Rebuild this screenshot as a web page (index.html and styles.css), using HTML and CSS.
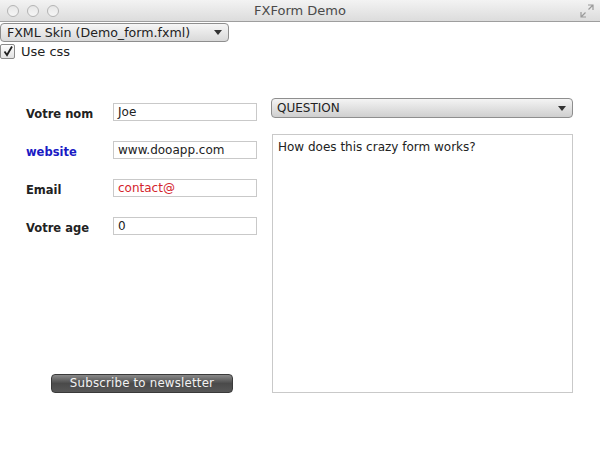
FILE: index.html
```html
<!DOCTYPE html>
<html>
<head>
<meta charset="utf-8">
<link rel="stylesheet" href="styles.css">
</head>
<body>
<div class="titlebar">
  <div class="lights">
    <span class="light"></span><span class="light"></span><span class="light"></span>
  </div>
  <div class="title">FXForm Demo</div>
  <svg class="resize" width="14" height="14" viewBox="0 0 14 14">
    <path d="M8 1h5v5M13 1L8.5 5.5M6 13H1V8M1 13l4.5-4.5" fill="none" stroke="#9a9a9a" stroke-width="1.2"/>
  </svg>
</div>
<div class="skin-combo">
  <span class="combo-text">FXML Skin (Demo_form.fxml)</span>
  <span class="arrow"></span>
</div>
<label class="check-row">
  <span class="checkbox"><svg width="12" height="12" viewBox="0 0 12 12"><path d="M2.5 6.5L5 10L10 1.5" fill="none" stroke="#222" stroke-width="1.8"/></svg></span>
  <span class="check-label">Use css</span>
</label>
<div class="main">
  <div class="left">
    <div class="form">
      <div class="label">Votre nom</div>
      <div class="field">Joe</div>
      <div class="label blue">website</div>
      <div class="field">www.dooapp.com</div>
      <div class="label">Email</div>
      <div class="field red">contact@</div>
      <div class="label">Votre age</div>
      <div class="field">0</div>
    </div>
    <div class="button">Subscribe to newsletter</div>
  </div>
  <div class="right">
    <div class="q-combo">
      <span class="combo-text">QUESTION</span>
      <span class="arrow"></span>
    </div>
    <div class="textarea">How does this crazy form works?</div>
  </div>
</div>
</body>
</html>
```

FILE: styles.css
```css
html, body {
  margin: 0;
  padding: 0;
  background: #ffffff;
  width: 600px;
  height: 459px;
  overflow: hidden;
  font-family: "DejaVu Sans", "Liberation Sans", sans-serif;
  font-size: 12px;
  color: #1a1a1a;
}
.titlebar {
  height: 21px;
  border-bottom: 1px solid #9e9e9e;
  background: linear-gradient(#f3f3f3, #dcdcdc);
  display: flex;
  align-items: center;
  position: relative;
}
.lights {
  display: flex;
  gap: 8px;
  padding-left: 7px;
}
.light {
  width: 10px;
  height: 10px;
  border-radius: 50%;
  border: 1px solid #b4b4b4;
  background: linear-gradient(#e6e6e6, #f6f6f6);
}
.title {
  position: absolute;
  left: 0;
  right: 0;
  text-align: center;
  font-size: 13px;
  color: #4a4a4a;
  top: 3px;
}
.resize {
  position: absolute;
  right: 6px;
  top: 4px;
}
.skin-combo {
  margin-top: 1px;
  height: 17px;
  border: 1px solid #8e8e8e;
  border-radius: 4px;
  background: linear-gradient(#f6f6f6, #d9d9d9);
  display: flex;
  align-items: center;
  justify-content: space-between;
  padding: 0 6px 0 6px;
  box-sizing: content-box;
  width: 215px;
  font-size: 12.6px;
  color: #222;
}
.arrow {
  width: 0;
  height: 0;
  border-left: 4px solid transparent;
  border-right: 4px solid transparent;
  border-top: 5px solid #333;
}
.check-row {
  display: flex;
  align-items: center;
  gap: 6px;
  height: 16px;
  margin-top: 1px;
}
.checkbox {
  width: 13px;
  height: 13px;
  border: 1px solid #8a8a8a;
  border-radius: 2px;
  background: linear-gradient(#fdfdfd, #e2e2e2);
  display: flex;
  align-items: center;
  justify-content: center;
}
.check-label {
  font-size: 13px;
  color: #222;
}
.main {
  display: flex;
  margin-top: 39px;
  height: 295px;
}
.left {
  width: 271px;
  padding-left: 26px;
  padding-top: 5px;
  box-sizing: border-box;
  display: flex;
  flex-direction: column;
}
.form {
  display: grid;
  grid-template-columns: 87px 144px;
  row-gap: 20px;
  align-items: center;
}
.label {
  font-weight: bold;
  font-size: 11.5px;
  color: #222;
  padding-top: 3px;
}
.label.blue { color: #1a1ac4; }
.field {
  height: 16px;
  border: 1px solid #c9c9c9;
  background: #fff;
  padding-left: 4px;
  line-height: 16px;
  font-size: 12px;
  color: #222;
}
.field.red { color: #d4242c; }
.button {
  margin-top: auto;
  margin-left: 25px;
  width: 180px;
  height: 17px;
  border: 1px solid #3a3a3a;
  border-radius: 4px;
  background: linear-gradient(#8a8a8a, #4a4a4a 50%, #575757);
  color: #f2f2f2;
  text-align: center;
  line-height: 17px;
  font-size: 11.8px;
  letter-spacing: 0.2px;
}
.right {
  width: 302px;
  display: flex;
  flex-direction: column;
}
.q-combo {
  height: 18px;
  border: 1px solid #8e8e8e;
  border-radius: 4px;
  background: linear-gradient(#f4f4f4, #cfcfcf);
  display: flex;
  align-items: center;
  justify-content: space-between;
  padding: 0 6px 0 5px;
  font-size: 12px;
  color: #222;
}
.textarea {
  margin-top: 16px;
  margin-left: 1px;
  flex: 1;
  border: 1px solid #c9c9c9;
  padding: 5px 5px;
  font-size: 12px;
  color: #222;
}
```
